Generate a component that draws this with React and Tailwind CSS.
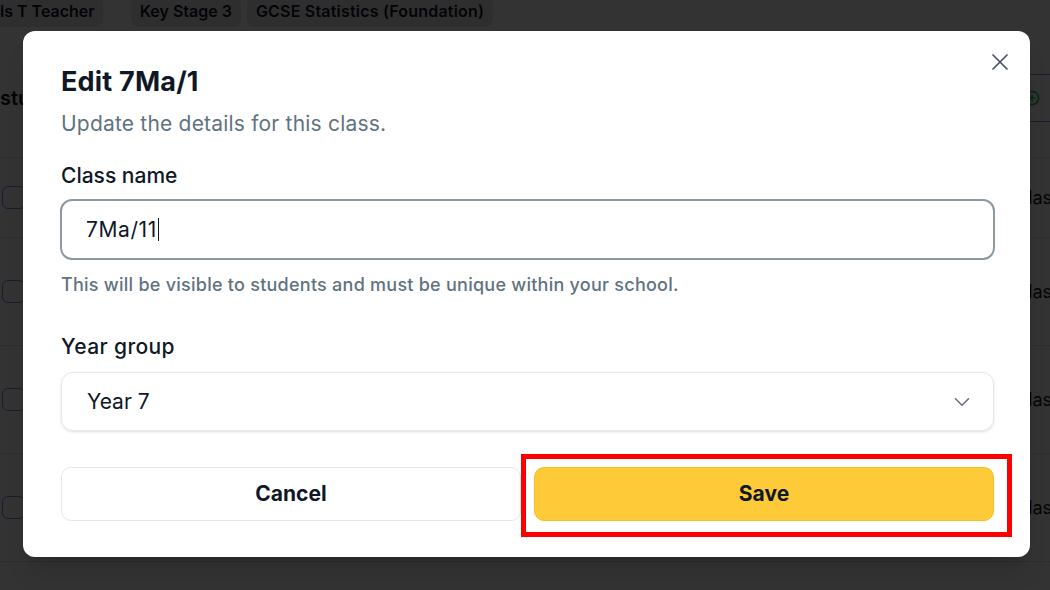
import React from 'react';
import { X, ChevronDown, PlusCircle } from 'lucide-react';

const rows = [
    { id: 1, h: 'h-[80px]' },
    { id: 2, h: 'h-[108px]' },
    { id: 3, h: 'h-[108px]' },
    { id: 4, h: 'h-[108px]' },
];

const Chip = ({ children, className }) => (
    <span className={`flex h-8 items-center rounded-lg bg-gray-200 px-[9px] text-[16px] font-semibold text-gray-900 ${className || ''}`}>
        {children}
    </span>
);

const ClassesPage = () => (
    <div className="flex flex-col">
        <div className="-mt-[5px] flex items-center">
            <Chip className="-ml-[10px] pl-[10px] pr-[8px]">ls T Teacher</Chip>
            <Chip className="ml-[28px]">Key Stage 3</Chip>
            <Chip className="ml-[6px] tracking-[0.2px]">GCSE Statistics (Foundation)</Chip>
        </div>

        {/* header */}
        <div className="flex h-[131px] items-center justify-between border-b border-gray-200 pt-[12px]">
            <span className="text-[20px] font-semibold text-gray-900">students</span>
            <div className="-mr-4 flex h-[48px] items-center border-y border-[#8b7cff] pr-[26px] pl-3">
                <PlusCircle className="h-4 w-4 text-[#22c55e]" strokeWidth={2.5} />
            </div>
        </div>

        {rows.map((r) => (
            <div key={r.id} className={`flex items-center justify-between border-b border-gray-200 pl-[2px] ${r.h}`}>
                <span className="h-[23px] w-[23px] rounded-md border-[1.5px] border-[#8b7cff]" />
                <span className="w-[35px] overflow-hidden whitespace-nowrap text-[18px] text-gray-900">Class</span>
            </div>
        ))}
    </div>
);

const EditClassDialog = () => (
    <div className="relative flex w-[1007px] flex-col rounded-xl bg-white pt-[35px] pr-[36px] pb-[36px] pl-[38px] shadow-xl">
        <button className="absolute top-[17px] right-[16px] flex h-7 w-7 items-center justify-center text-gray-600">
            <X size={36} strokeWidth={1.5} />
        </button>

        <h2 className="text-[27px] leading-[32px] font-bold tracking-[0.2px] text-gray-900">Edit 7Ma/1</h2>
        <p className="mt-[12px] text-[21px] leading-[28px] tracking-[0.2px] text-[#5f7380]">Update the details for this class.</p>

        <label className="mt-[24px] text-[21px] leading-[28px] font-medium text-gray-900">Class name</label>
        <div className="mt-[9px] -mx-px flex h-[61px] items-center rounded-xl border-2 border-[#8d989f] px-[24px] text-[21px] tracking-[0.6px] text-gray-900">
            7Ma/11
            <span className="ml-px h-[23px] w-px bg-gray-900" />
        </div>
        <p className="mt-[13px] text-[18px] leading-[24px] font-medium tracking-[0.25px] text-[#5f7380]">
            This will be visible to students and must be unique within your school.
        </p>

        <label className="mt-[36px] text-[21px] leading-[28px] font-medium tracking-[0.4px] text-gray-900">Year group</label>
        <div className="mt-[11px] flex h-[59px] items-center justify-between rounded-xl border border-gray-200 pr-[18px] pl-[25px] text-[21px] text-gray-900 shadow-sm">
            <span>Year 7</span>
            <ChevronDown size={26} strokeWidth={1.5} className="text-gray-500" />
        </div>

        <div className="mt-[36px] grid grid-cols-2 gap-[13px]">
            <button className="h-[54px] rounded-[10px] border border-gray-200 bg-white text-[21px] font-bold text-gray-900">
                Cancel
            </button>
            <div className="relative">
                <button className="h-[54px] w-full rounded-[10px] border border-[#f3bf27] bg-[#ffca37] text-[21px] font-bold text-gray-900">
                    Save
                </button>
                <div className="pointer-events-none absolute -top-[13px] -right-[18px] -bottom-[16px] -left-[13px] border-[5px] border-[#ff0000]" />
            </div>
        </div>
    </div>
);

export default function App() {
    return (
        <div className="relative h-[590px] w-[1050px] overflow-hidden bg-white font-['Inter',sans-serif]">
            <ClassesPage />
            <div className="absolute inset-0 flex items-start justify-center bg-black/80 pt-[31px] pl-[3px]">
                <EditClassDialog />
            </div>
        </div>
    );
}
